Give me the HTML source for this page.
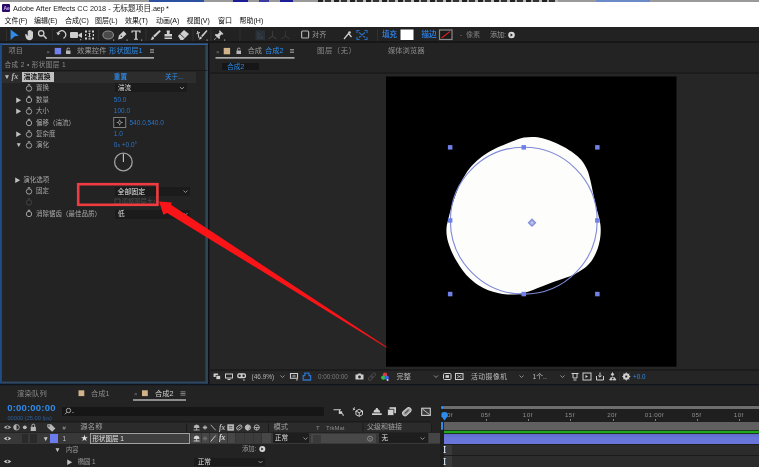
<!DOCTYPE html>
<html lang="zh-CN">
<head>
<meta charset="utf-8">
<title>Adobe After Effects CC 2018 - 无标题项目.aep *</title>
<style>
html,body{margin:0;padding:0;}
body{width:759px;height:467px;position:relative;overflow:hidden;background:#232323;
 font-family:"Liberation Sans","Noto Sans CJK SC",sans-serif;font-size:7px;color:#a0a0a0;}
.a{position:absolute;}
.t{position:absolute;white-space:nowrap;line-height:10px;height:10px;filter:blur(0.3px);}
.b{color:#2d8ceb;}
.w{color:#dcdcdc;}
.g{color:#8a8a8a;}
.d{color:#555;}
svg{position:absolute;left:0;top:0;overflow:visible;}
.ic{filter:blur(0.3px);}
</style>
</head>
<body>
<!-- top cropped strip -->
<div class="a" style="left:0;top:0;width:759px;height:1.500px;background:#9a9a9a"></div>
<div class="a" style="left:149px;top:0;width:55px;height:1.500px;background:#2c50a0"></div>
<div class="a" style="left:233px;top:0;width:15px;height:1.500px;background:#1c1c94"></div>
<div class="a" style="left:259px;top:0;width:10px;height:1.500px;background:#3a3aa0"></div>
<div class="a" style="left:280px;top:0;width:13px;height:1.500px;background:#1c1c94"></div>
<div class="a" style="left:318px;top:0;width:240px;height:2px;background:repeating-linear-gradient(90deg,#222 0,#222 5px,#aaa 5px,#aaa 7px,#333 7px,#333 13px,#bbb 13px,#bbb 16px)"></div>
<div class="a" style="left:596px;top:0;width:54px;height:1.500px;background:#6a8ac8"></div>
<!-- title bar + menu bar -->
<div class="a" style="left:0;top:2px;width:759px;height:25px;background:#fff"></div>
<div class="a" style="left:2px;top:4px;width:8px;height:8px;background:#2c0c62;border-radius:1px"></div>
<div class="t" style="left:3.400px;top:3.100px;font-size:5px;color:#c9a7ff;font-weight:bold">Ae</div>
<div class="t" style="left:13px;top:4.3px;font-size:7.3px;color:#1c1c1c">Adobe After Effects CC 2018 - <span style="font-size:7.700px">无标题项目</span><span style="letter-spacing:-.25px">.aep *</span></div>
<div class="t" style="left:4.5px;top:16px;font-size:7px;color:#0c0c0c">文件(F)</div><div class="t" style="left:34px;top:16px;font-size:7px;color:#0c0c0c">编辑(E)</div><div class="t" style="left:65px;top:16px;font-size:7px;color:#0c0c0c">合成(C)</div><div class="t" style="left:95px;top:16px;font-size:7px;color:#0c0c0c">图层(L)</div><div class="t" style="left:125px;top:16px;font-size:7px;color:#0c0c0c">效果(T)</div><div class="t" style="left:156px;top:16px;font-size:7px;color:#0c0c0c">动画(A)</div><div class="t" style="left:186.5px;top:16px;font-size:7px;color:#0c0c0c">视图(V)</div><div class="t" style="left:218px;top:16px;font-size:7px;color:#0c0c0c">窗口</div><div class="t" style="left:239.5px;top:16px;font-size:7px;color:#0c0c0c">帮助(H)</div>
<!-- toolbar -->
<div class="a" style="left:0;top:27px;width:759px;height:14px;background:#222"></div>
<div class="a" style="left:0;top:41px;width:759px;height:2.600px;background:#171717"></div>
<svg class="ic" width="759" height="467" viewBox="0 0 759 467">
 <g fill="none" stroke="#303030" stroke-width="1">
  <path d="M6.5 29v12M52.5 29v12M98.500 29v12M146 29v12M193 29v12M211 29v12M240 29v12M377.500 29v12"/>
 </g>
 <!-- selection arrow -->
 <path d="M10.600 29.500L18.800 35.700L14.700 36.300L10.600 40Z" fill="#2d8ceb"/>
 <!-- hand -->
 <path d="M25 34.5l1.2-.6l1.6 2v-5.2h1.3v3.5v-4.3h1.3v4.3v-3.8h1.3v4v-2.8h1.3v5.2c0 2.2-1.4 3.4-3.6 3.4c-1.800 0-2.600-.8-3.400-2.200z" fill="#cfcfcf"/>
 <!-- zoom -->
 <circle cx="41.200" cy="33.300" r="2.700" fill="none" stroke="#cfcfcf" stroke-width="1.300"/>
 <path d="M43.600 35.600l3 3.200" stroke="#cfcfcf" stroke-width="1.500"/>
 <!-- rotate -->
 <path d="M58 33.500a4 4 0 1 1 5.500 4.800" fill="none" stroke="#cfcfcf" stroke-width="1.300"/>
 <path d="M56.300 32.200l1.700 3.200l2.400-2.400z" fill="#cfcfcf"/>
 <!-- camera -->
 <rect x="70" y="32" width="8" height="6" rx="1" fill="#cfcfcf"/>
 <path d="M78.500 34.500l3.500-2v5.500l-3.500-2z" fill="#cfcfcf"/>
 <rect x="80" y="39" width="1.200" height="1.200" fill="#999"/>
 <!-- pan behind -->
 <g fill="#cfcfcf">
  <rect x="85" y="30.500" width="2" height="2"/><rect x="88.500" y="30.500" width="2" height="1.200"/><rect x="92" y="30.500" width="2" height="2"/>
  <rect x="85" y="34" width="1.200" height="2"/><rect x="92.800" y="34" width="1.200" height="2"/>
  <rect x="85" y="37.500" width="2" height="2"/><rect x="88.500" y="38.300" width="2" height="1.200"/><rect x="92" y="37.500" width="2" height="2"/>
  <path d="M89.500 32.500l1.500 1.500h-1v2h1l-1.500 1.500l-1.500-1.500h1v-2h-1z"/>
 </g>
 <!-- ellipse tool -->
 <ellipse cx="108.200" cy="35" rx="5.300" ry="4" fill="#4a4a4a" stroke="#8c8c8c" stroke-width="1.100"/>
 <rect x="113" y="39.500" width="1.200" height="1.200" fill="#999"/>
 <!-- pen -->
 <path d="M118 39.500l1-4l4.500-4.500l3 3l-4.500 4.500z" fill="#cfcfcf"/>
 <circle cx="121.300" cy="36.300" r="0.800" fill="#222"/>
 <rect x="126.500" y="39.500" width="1.200" height="1.200" fill="#999"/>
 <!-- T -->
 <path d="M131.500 30.500h9v2.300h-1l-.4-1.200h-2.300v7l1.200.3v.8h-4v-.8l1.200-.3v-7h-2.300l-.4 1.200h-1z" fill="#cfcfcf"/>
 <rect x="141" y="39.500" width="1.200" height="1.200" fill="#999"/>
 <!-- brush -->
 <path d="M159.500 30l1.300 1.300l-6 6l-1.800-1.200z" fill="#cfcfcf"/>
 <path d="M152.500 36.500l1.800 1.500c-.5 1.500-2 2-3.800 1.800c1-.8 1-2.300 2-3.300z" fill="#cfcfcf"/>
 <!-- stamp -->
 <path d="M166.500 30.500h3.500l-.6 3.500h2.600v2.500h-7.500v-2.500h2.600z" fill="#cfcfcf"/>
 <rect x="164.500" y="37.500" width="7.500" height="1.500" fill="#cfcfcf"/>
 <!-- eraser -->
 <path d="M178 36l6-6l5 4l-6 6h-2.500z" fill="#cfcfcf"/>
 <path d="M180 34l4.500 4" stroke="#222" stroke-width=".8"/>
 <!-- roto brush -->
 <path d="M206.500 30l1 1l-5 6l-1.500-1z" fill="#cfcfcf"/>
 <path d="M200.500 36.500l1.500 1.300c-.6 1.400-1.800 1.800-3.300 1.600c.9-.8.900-2 1.800-2.900z" fill="#cfcfcf"/>
 <path d="M197.500 31l1.500 7" stroke="#cfcfcf" stroke-width="1"/>
 <path d="M196.500 33.500l3.500-1" stroke="#cfcfcf" stroke-width="1"/>
 <rect x="206.500" y="39.500" width="1.200" height="1.200" fill="#999"/>
 <!-- pin -->
 <path d="M219.500 30l4 4l-1 .8l-.8-.5l-2 2l.3 2l-1 .8l-2-2l-2.500 2.800l-.5-.5l2.800-2.500l-2-2l.8-1l2 .3l2-2l-.5-.8z" fill="#cfcfcf"/>
 <rect x="224" y="39.500" width="1.200" height="1.200" fill="#999"/>
 <!-- disabled axis icons -->
 <rect x="255.500" y="30.500" width="9.500" height="9.500" fill="#2a3038"/>
 <path d="M258 38v-5.500l5 5.500z" fill="none" stroke="#3a4048" stroke-width="1"/>
 <path d="M272.500 31v5l-4 3M272.500 36l4 3" fill="none" stroke="#3a3a3a" stroke-width="1.200"/>
 <path d="M285.500 31v5l-4 3M285.500 36l4 3" fill="none" stroke="#343434" stroke-width="1.200"/>
 <!-- snapping checkbox -->
 <rect x="301.600" y="31" width="7" height="7" rx="1" fill="none" stroke="#b0b0b0" stroke-width="1.200"/>
 <!-- snap icons -->
 <path d="M344 39l4.500-5.500l3 3.500" fill="none" stroke="#cfcfcf" stroke-width="1.200"/>
 <circle cx="349.500" cy="32.500" r="1.300" fill="#cfcfcf"/>
 <path d="M357 33v-2.500h2.500M364.500 30.500h2.500v2.500M367 37v2.500h-2.500M359.500 39.500h-2.500v-2.500M359 32.500l6 5M365 32.500l-6 5" fill="none" stroke="#2870c0" stroke-width="1.100"/>
 <!-- fill swatch -->
 <rect x="400.500" y="29.500" width="13" height="10.500" fill="#fff"/>
 <!-- stroke swatch -->
 <rect x="439.500" y="30" width="12.500" height="9.500" fill="#1a1a1a" stroke="#8a8a8a" stroke-width="1.200"/>
 <path d="M441.500 38l8.500-6.500" stroke="#d82020" stroke-width="1.100"/>
 <!-- add icon -->
 <circle cx="511.500" cy="35" r="3.300" fill="#d8d8d8"/>
 <path d="M510.500 33.300l2.300 1.700l-2.300 1.700z" fill="#222"/>
</svg>
<div class="t" style="left:312px;top:30px;font-size:7.200px;color:#9a9a9a">对齐</div>
<div class="t" style="left:382px;top:30px;font-size:7.500px;color:#2a7ad8;font-weight:bold">填充</div>
<div class="t" style="left:421.500px;top:30px;font-size:7.500px;color:#2a7ad8;font-weight:bold">描边</div>
<div class="t" style="left:460px;top:30px;font-size:7px;color:#777">-</div><div class="t" style="left:466px;top:30px;font-size:7.100px;color:#777">像素</div>
<div class="t" style="left:490px;top:30px;font-size:7px;color:#9a9a9a">添加:</div>

<!-- left panel: effect controls -->
<div class="a" style="left:0;top:43px;width:759px;height:424px;background:#232323"></div>
<svg width="759" height="467" viewBox="0 0 759 467">
 <rect x="0" y="43.500" width="208" height="1.400" fill="#3566a2"/>
 <rect x="0" y="43.400" width="1.900" height="340.400" fill="#1f4c84"/>
 <rect x="205.300" y="45.200" width="2.700" height="338.600" fill="#2c4656"/>
 <rect x="1.900" y="381.600" width="206.100" height="2.200" fill="#2e4a66"/>
 <rect x="208" y="43.400" width="1.400" height="340.400" fill="#0f0f18"/>
 <rect x="0" y="383.800" width="759" height="1.500" fill="#10141c"/>
</svg>
<!-- tabs -->
<div class="t" style="left:8.500px;top:46px;font-size:7.200px;color:#8c8c8c">项目</div>
<div class="t" style="left:46.500px;top:46.500px;font-size:6px;color:#7a7a7a">×</div>
<svg width="759" height="467" viewBox="0 0 759 467"><rect x="54.700" y="47.900" width="6.400" height="6.400" fill="#7080ec"/></svg>
<svg class="ic" width="759" height="467" viewBox="0 0 759 467">
 <rect x="66" y="50.500" width="4.500" height="3.500" fill="#b8b8b8"/>
 <path d="M67 50.500v-1.200a1.300 1.300 0 0 1 2.600 0" fill="none" stroke="#b8b8b8" stroke-width=".9"/>
 <path d="M150 49.500h4M150 51h4M150 52.500h4" stroke="#9a9a9a" stroke-width=".8"/>
</svg>
<div class="t" style="left:77px;top:46px;font-size:7.300px;color:#9c9c9c;letter-spacing:.1px">效果控件</div>
<div class="t b" style="left:109px;top:46px;font-size:7.300px;letter-spacing:.1px">形状图层1</div>
<svg width="759" height="467" viewBox="0 0 759 467"><rect x="46" y="57" width="108" height="1.700" fill="#a8a8a8"/><rect x="215.500" y="57" width="79" height="1.700" fill="#a8a8a8"/><rect x="133" y="399.200" width="53" height="1.600" fill="#a8a8a8"/></svg>
<!-- breadcrumb -->
<div class="t" style="left:4.500px;top:59.500px;font-size:6.600px;color:#8c8c8c;letter-spacing:.38px">合成 2 • 形状图层 1</div>
<div class="a" style="left:1.500px;top:70px;width:205px;height:1px;background:#1a1a1a"></div>
<!-- fx header row -->
<div class="a" style="left:1.800px;top:71.500px;width:194.700px;height:11px;background:#2d2d2d"></div>
<div class="a" style="left:21.700px;top:71.700px;width:32.600px;height:9.900px;background:#c2c2c2"></div>
<div class="t" style="left:3.800px;top:72px;font-size:6.500px;color:#c0c0c0">▼</div>
<div class="t" style="left:11.500px;top:71.500px;font-size:8px;color:#b8b8b8;font-family:'Liberation Serif',serif;font-style:italic;font-weight:bold">fx</div>
<div class="t" style="left:23.800px;top:72px;font-size:6.700px;color:#101010;font-weight:bold">湍流置换</div>
<div class="t b" style="left:113.800px;top:72px;font-size:6.600px;font-weight:bold">重置</div>
<div class="t b" style="left:165px;top:72px;font-size:6.600px">关于...</div>
<div class="t" style="left:36px;top:83.0px;font-size:6.500px;color:#a8a8a8">置换</div><div class="t" style="left:36px;top:94.5px;font-size:6.500px;color:#a8a8a8">数量</div><div class="t" style="left:15.500px;top:94.5px;font-size:6px;color:#c0c0c0">▶</div><div class="t" style="left:36px;top:106.0px;font-size:6.500px;color:#a8a8a8">大小</div><div class="t" style="left:15.500px;top:106.0px;font-size:6px;color:#c0c0c0">▶</div><div class="t" style="left:36px;top:117.5px;font-size:6.500px;color:#a8a8a8">偏移（湍流）</div><div class="t" style="left:36px;top:129.0px;font-size:6.500px;color:#a8a8a8">复杂度</div><div class="t" style="left:15.500px;top:129.0px;font-size:6px;color:#c0c0c0">▶</div><div class="t" style="left:36px;top:140.0px;font-size:6.500px;color:#a8a8a8">演化</div><div class="t" style="left:15.500px;top:140.0px;font-size:6.500px;color:#c0c0c0">▼</div><div class="a" style="left:114.500px;top:83.400px;width:72px;height:8.800px;background:#1b1b1b"></div>
<div class="t w" style="left:118px;top:83px;font-size:6.600px">湍流</div>
<div class="t" style="left:113.800px;top:94.500px;font-size:6.500px;color:#2b74c6">50.0</div>
<div class="t" style="left:113.800px;top:106px;font-size:6.500px;color:#2b74c6">100.0</div>
<div class="t" style="left:129.500px;top:117.500px;font-size:6.500px;color:#2b74c6">540.0,540.0</div>
<div class="t" style="left:113.800px;top:129px;font-size:6.500px;color:#2b74c6">1.0</div>
<div class="t" style="left:113.800px;top:140px;font-size:6.500px;color:#2b74c6">0<span style="font-size:5px">x</span> +0.0°</div>
<div class="t" style="left:14.500px;top:175px;font-size:6px;color:#c0c0c0">▶</div>
<div class="t" style="left:23.300px;top:175px;font-size:6.500px;color:#a8a8a8">演化选项</div>
<div class="t" style="left:36px;top:186px;font-size:6.500px;color:#a8a8a8">固定</div>
<div class="a" style="left:114.500px;top:187px;width:75.500px;height:9px;background:#1b1b1b"></div>
<div class="t w" style="left:117.500px;top:186.700px;font-size:6.900px;color:#e6e6e6">全部固定</div>
<div class="t" style="left:121.600px;top:196.500px;font-size:6.300px;color:#4c4c4c">调整图层大小</div>
<div class="t" style="left:36px;top:208.500px;font-size:6.500px;color:#a8a8a8">消除锯齿（最佳品质）</div>
<div class="a" style="left:114.500px;top:209.700px;width:75.500px;height:9px;background:#1b1b1b"></div>
<div class="t w" style="left:117.800px;top:209.300px;font-size:6.900px">低</div>
<svg class="ic" width="759" height="467" viewBox="0 0 759 467"><circle cx="29.0" cy="88.5" r="2.700" fill="none" stroke="#b4b4b4" stroke-width=".85"/><path d="M27.8 84.8h2.400" stroke="#b4b4b4" stroke-width="1"/><circle cx="29.0" cy="100.0" r="2.700" fill="none" stroke="#b4b4b4" stroke-width=".85"/><path d="M27.8 96.3h2.400" stroke="#b4b4b4" stroke-width="1"/><circle cx="29.0" cy="111.5" r="2.700" fill="none" stroke="#b4b4b4" stroke-width=".85"/><path d="M27.8 107.8h2.400" stroke="#b4b4b4" stroke-width="1"/><circle cx="29.0" cy="123.0" r="2.700" fill="none" stroke="#b4b4b4" stroke-width=".85"/><path d="M27.8 119.3h2.400" stroke="#b4b4b4" stroke-width="1"/><circle cx="29.0" cy="134.5" r="2.700" fill="none" stroke="#b4b4b4" stroke-width=".85"/><path d="M27.8 130.8h2.400" stroke="#b4b4b4" stroke-width="1"/><circle cx="29.0" cy="145.5" r="2.700" fill="none" stroke="#b4b4b4" stroke-width=".85"/><path d="M27.8 141.8h2.400" stroke="#b4b4b4" stroke-width="1"/><path d="M180 87l2 2l2-2" fill="none" stroke="#9a9a9a" stroke-width=".9"/><rect x="113.700" y="117.500" width="12" height="10" fill="#1b1b1b" stroke="#808080" stroke-width="1"/><path d="M116.700 122.500h6M119.700 119.500v6" stroke="#b0b0b0" stroke-width=".8"/><circle cx="119.700" cy="122.500" r="1.400" fill="#1b1b1b" stroke="#b0b0b0" stroke-width=".7"/><circle cx="123.400" cy="162" r="8.800" fill="none" stroke="#a0a0a0" stroke-width="1.300"/><path d="M123.400 162v-8" stroke="#c8c8c8" stroke-width="1.100"/><circle cx="29.0" cy="191.5" r="2.700" fill="none" stroke="#b4b4b4" stroke-width=".85"/><path d="M27.8 187.8h2.400" stroke="#b4b4b4" stroke-width="1"/><circle cx="29.0" cy="202.5" r="2.700" fill="none" stroke="#484848" stroke-width=".85"/><path d="M27.8 198.8h2.400" stroke="#484848" stroke-width="1"/><circle cx="29.0" cy="214.0" r="2.700" fill="none" stroke="#b4b4b4" stroke-width=".85"/><path d="M27.8 210.3h2.400" stroke="#b4b4b4" stroke-width="1"/><path d="M183.500 190.500l2 2l2-2M183.500 213l2 2l2-2" fill="none" stroke="#9a9a9a" stroke-width=".9"/><rect x="115" y="199" width="5" height="5" fill="none" stroke="#484848" stroke-width=".9"/></svg>

<!-- composition panel -->
<div class="t" style="left:216px;top:46.500px;font-size:6px;color:#7a7a7a">×</div>
<svg width="759" height="467" viewBox="0 0 759 467"><rect x="223.700" y="47.900" width="6.400" height="6.400" fill="#d2b288"/></svg>
<svg class="ic" width="759" height="467" viewBox="0 0 759 467">
 <rect x="236.500" y="50.500" width="4.500" height="3.500" fill="#b8b8b8"/>
 <path d="M237.500 50.500v-1.200a1.300 1.300 0 0 1 2.600 0" fill="none" stroke="#b8b8b8" stroke-width=".9"/>
 <path d="M290 49.500h4M290 51h4M290 52.500h4" stroke="#9a9a9a" stroke-width=".8"/>
</svg>
<div class="t" style="left:247.500px;top:46px;font-size:7.300px;color:#9c9c9c">合成</div>
<div class="t b" style="left:265px;top:46px;font-size:7.300px">合成2</div>
<div class="t" style="left:317px;top:46px;font-size:7.300px;color:#8c8c8c;letter-spacing:.6px">图层（无）</div>
<div class="t" style="left:388px;top:46px;font-size:7.300px;color:#8c8c8c">媒体浏览器</div>
<div class="a" style="left:221.500px;top:62.500px;width:37.500px;height:7.500px;background:#161616"></div>
<div class="t b" style="left:227px;top:61.500px;font-size:6.800px">合成2</div>
<div class="a" style="left:210px;top:72px;width:549px;height:2px;background:#1c1c1c"></div>
<div class="a" style="left:210px;top:74px;width:549px;height:295px;background:#262626"></div>
<!-- canvas -->
<svg width="759" height="467" viewBox="0 0 759 467"><rect x="386" y="76.500" width="290.500" height="290.200" fill="#000"/></svg>
<svg width="759" height="467" viewBox="0 0 759 467" style="filter:blur(0.35px)">
 <path d="M524.0 137.6C520.2 138.3 515.4 140.3 512.0 141.5C508.6 142.7 506.9 143.6 503.6 145.0C500.3 146.4 495.7 148.2 492.0 150.2C488.3 152.2 484.6 154.6 481.4 157.0C478.2 159.4 475.4 162.0 472.8 164.7C470.2 167.4 468.1 170.2 466.0 173.4C463.9 176.6 462.0 180.3 460.2 184.0C458.4 187.7 456.8 191.7 455.4 195.5C454.0 199.3 452.7 203.3 451.6 207.1C450.5 210.8 449.4 214.7 448.6 218.0C447.8 221.3 446.9 224.1 446.6 227.0C446.3 229.9 446.4 232.5 446.7 235.3C447.0 238.1 447.7 240.9 448.7 243.9C449.7 246.9 451.1 250.4 452.5 253.5C453.9 256.6 455.5 259.3 457.3 262.2C459.1 265.1 461.0 268.2 463.1 270.9C465.2 273.6 467.3 276.2 469.9 278.6C472.5 281.0 475.4 283.4 478.5 285.3C481.6 287.2 485.0 288.9 488.2 290.2C491.4 291.5 494.6 292.3 497.8 293.0C501.0 293.7 504.3 294.2 507.5 294.4C510.7 294.6 514.2 294.5 517.1 294.2C520.0 293.9 522.4 293.3 525.0 292.6C527.6 291.9 530.0 291.1 533.0 290.0C536.0 288.9 539.5 287.4 543.1 286.0C546.7 284.6 550.8 282.9 554.7 281.5C558.6 280.1 562.8 279.0 566.3 277.6C569.8 276.2 572.8 275.0 575.9 273.4C579.0 271.8 582.0 270.0 584.6 268.0C587.2 266.0 589.4 263.9 591.3 261.3C593.2 258.7 594.8 255.5 596.1 252.6C597.4 249.7 598.2 246.9 599.0 243.9C599.8 240.9 600.4 237.5 600.6 234.3C600.8 231.1 600.8 227.9 600.4 224.6C600.0 221.3 599.1 218.1 598.2 214.5C597.3 210.9 596.1 207.0 595.2 203.2C594.3 199.4 593.6 195.5 592.8 191.7C592.0 187.8 591.2 183.6 590.3 180.1C589.4 176.6 588.8 173.6 587.5 170.5C586.2 167.4 584.5 164.4 582.6 161.8C580.7 159.2 578.6 157.3 575.9 155.1C573.2 152.8 569.8 150.4 566.3 148.3C562.8 146.2 558.2 144.1 554.7 142.5C551.2 140.9 548.3 139.9 545.0 139.0C541.7 138.1 538.5 137.2 535.0 137.0C531.5 136.8 527.8 136.8 524.0 137.6Z" fill="#fdfdfb"/>
 <circle cx="523.800" cy="220.700" r="73.400" fill="none" stroke="#7f8ad6" stroke-width="1.100"/>
 <g fill="#6f80e6">
  <rect x="447.9" y="145.1" width="4.500" height="4.500"/>
  <rect x="447.9" y="218.2" width="4.500" height="4.500"/>
  <rect x="447.9" y="291.8" width="4.500" height="4.500"/>
  <rect x="521.5" y="145.1" width="4.500" height="4.500"/>
  <rect x="521.5" y="291.8" width="4.500" height="4.500"/>
  <rect x="595.1" y="145.1" width="4.500" height="4.500"/>
  <rect x="595.1" y="218.2" width="4.500" height="4.500"/>
  <rect x="595.1" y="291.8" width="4.500" height="4.500"/>
 </g>
 <path d="M532 219.200l3.500 3.500l-3.500 3.500l-3.500-3.500z" fill="#a8b0e6" stroke="#8590da" stroke-width="1.300"/>
 <circle cx="532" cy="222.700" r="1" fill="#c4caf0"/>
</svg>
<!-- viewer controls -->
<div class="a" style="left:210px;top:369px;width:549px;height:2px;background:#1c1c1c"></div>
<div class="a" style="left:210px;top:371px;width:549px;height:13px;background:#252525"></div>

<svg class="ic" width="759" height="467" viewBox="0 0 759 467">
 <g fill="#cfcfcf">
  <rect x="213.600" y="373.500" width="4.500" height="3.500"/><rect x="216" y="375.500" width="4.500" height="4" stroke="#232323" stroke-width=".7"/>
  <path d="M225 373.500h8v5h-8zM226 374.500v3h6v-3zM227.500 379h3v1h-3z" fill-rule="evenodd"/>
  <rect x="237.200" y="373.300" width="8.800" height="5" rx="1.800"/><rect x="243.300" y="379.300" width="1.300" height="1.300"/>
 </g>
 <circle cx="239.600" cy="375.800" r="1.200" fill="#252525"/><circle cx="243.600" cy="375.800" r="1.200" fill="#252525"/>
 <path d="M280.500 375.500l2 2l2-2M434 375.500l2 2l2-2M519.500 375.500l2 2l2-2M560.500 375.500l2 2l2-2" fill="none" stroke="#9a9a9a" stroke-width=".9"/>
 <path d="M290.500 373.500h7v4.800h-7z" fill="none" stroke="#cfcfcf" stroke-width="1.100"/><path d="M292 376h4M294 374.500v3" stroke="#cfcfcf" stroke-width=".6"/><rect x="296.300" y="379.200" width="1.300" height="1.300" fill="#cfcfcf"/>
 <path d="M303.200 380v-4.300h1.600v-2.500h4.200v2.500h1.600v4.300z" fill="none" stroke="#2b72c8" stroke-width="1.300"/>
 <path d="M355.500 374.500h2l.8-1h2.400l.8 1h2v5h-8z" fill="#cfcfcf"/><circle cx="359.500" cy="377" r="1.400" fill="#252525"/>
 <g transform="rotate(-45 372 376.700)" fill="none" stroke="#474747" stroke-width="1"><rect x="367.500" y="375.300" width="5" height="2.800" rx="1.400"/><rect x="371.500" y="375.300" width="5" height="2.800" rx="1.400"/></g>
 <circle cx="385" cy="374.800" r="2.200" fill="#e03838"/><circle cx="383.300" cy="377.600" r="2.200" fill="#30c040"/><circle cx="386.700" cy="377.600" r="2.200" fill="#4060f0"/><circle cx="387.600" cy="380" r="1" fill="#d8d8d8"/>
 <rect x="443.500" y="373.500" width="7.500" height="6" rx="1" fill="none" stroke="#cfcfcf" stroke-width="1"/><rect x="445.500" y="375.200" width="3.500" height="2.600" fill="#cfcfcf"/>
 <rect x="455.500" y="373.500" width="7.500" height="6" fill="none" stroke="#cfcfcf" stroke-width="1"/><path d="M457 375l4.500 3M461.500 375l-4.500 3" stroke="#cfcfcf" stroke-width=".7"/>
 <path d="M571.500 373.500h7M573 373.500v4.500h4v-4.500M573.500 380h3" fill="none" stroke="#cfcfcf" stroke-width="1"/>
 <rect x="583" y="373" width="8" height="7" fill="none" stroke="#cfcfcf" stroke-width="1"/><path d="M585.500 375v3l2.500-1.500z" fill="#cfcfcf"/>
 <path d="M596.500 376v4h7v-4M600 372.500v4.500M598.300 375.500l1.700 1.700l1.700-1.700" fill="none" stroke="#cfcfcf" stroke-width="1"/>
 <path d="M612.500 372.500l1.500 2.500h-3zM609.500 380l1.500-2.500l1.500 2.500zM613 380l1.500-2.500l1.500 2.500zM612.500 375v1.500M611 377.500h3" fill="#cfcfcf" stroke="#cfcfcf" stroke-width=".7"/>
 <path d="M619.500 372v9" stroke="#333" stroke-width="1"/>
 <circle cx="626.300" cy="376.500" r="2.400" fill="none" stroke="#cfcfcf" stroke-width="1.800"/>
 <path d="M626.300 372.500v8M622.300 376.500h8M623.500 373.700l5.600 5.600M629.100 373.700l-5.600 5.600" stroke="#cfcfcf" stroke-width="1"/>
 <circle cx="626.300" cy="376.500" r="1.100" fill="#252525"/>
</svg>
<div class="t" style="left:251.500px;top:371.500px;font-size:6.500px;color:#b4b4b4">(46.9%)</div>
<div class="t" style="left:318px;top:371.500px;font-size:6.300px;color:#7e7e7e">0:00:00:00</div>
<div class="t" style="left:396.500px;top:371.500px;font-size:7.200px;color:#bcbcbc">完整</div>
<div class="t" style="left:471px;top:371.500px;font-size:6.800px;color:#bcbcbc;letter-spacing:.5px">活动摄像机</div>
<div class="t" style="left:532.500px;top:371.500px;font-size:6.800px;color:#bcbcbc">1个..</div>
<div class="t b" style="left:633px;top:371.500px;font-size:6.300px">+0.0</div>

<!-- timeline panel -->

<div class="t" style="left:17px;top:388.500px;font-size:7.300px;color:#8c8c8c;letter-spacing:.2px">渲染队列</div>
<svg width="759" height="467" viewBox="0 0 759 467"><rect x="78.500" y="390.300" width="5.800" height="5.800" fill="#d2b288"/><rect x="142" y="390.300" width="5.800" height="5.800" fill="#d2b288"/></svg>
<div class="t" style="left:91px;top:388.500px;font-size:7.300px;color:#8c8c8c">合成1</div>
<div class="t" style="left:134px;top:389px;font-size:6px;color:#7a7a7a">×</div>
<div class="t" style="left:155px;top:388.500px;font-size:7.300px;color:#d0d0d0">合成2</div>
<div class="t b" style="left:7.200px;top:403px;font-size:9.500px;font-weight:bold;letter-spacing:.2px">0:00:00:00</div>
<div class="t" style="left:7.400px;top:412.500px;font-size:5.700px;color:#2a5f9a">00000 (25.00 fps)</div>
<div class="a" style="left:62px;top:406.500px;width:261.500px;height:9.500px;background:#161616"></div>
<!-- column header -->
<div class="a" style="left:0;top:421px;width:431px;height:1.200px;background:#1b1b1b"></div>
<div class="a" style="left:0;top:422.500px;width:431px;height:9.500px;background:#2b2b2b"></div>
<div class="t" style="left:62.500px;top:422.500px;font-size:6px;color:#9a9a9a">#</div>
<div class="t" style="left:80.300px;top:422px;font-size:7.300px;color:#a0a0a0;letter-spacing:.2px">源名称</div>
<div class="t" style="left:273.500px;top:422px;font-size:7.300px;color:#a0a0a0">模式</div>
<div class="t" style="left:316px;top:422.500px;font-size:6px;color:#8a8a8a">T</div>
<div class="t" style="left:326px;top:422.500px;font-size:6px;color:#8a8a8a">TrkMat</div>
<div class="t" style="left:367px;top:422px;font-size:7px;color:#a0a0a0">父级和链接</div>
<!-- layer row -->
<div class="a" style="left:0;top:432.500px;width:440px;height:11.500px;background:#383838"></div>
<div class="a" style="left:22.400px;top:434px;width:5.500px;height:9px;background:#2a2a2a"></div>
<div class="a" style="left:30px;top:434px;width:7px;height:9px;background:#2a2a2a"></div>
<div class="t" style="left:42.600px;top:433.800px;font-size:6.500px;color:#c8c8c8">▼</div>
<div class="a" style="left:50px;top:433.700px;width:8px;height:9.800px;background:#6c7cec"></div>
<div class="t" style="left:62.500px;top:433.500px;font-size:6.500px;color:#c0c0c0">1</div>
<div class="t" style="left:81px;top:433.300px;font-size:7px;color:#e0e0e0">★</div>
<div class="a" style="left:90px;top:433.200px;width:98px;height:9px;background:#3e3e3e;border:.8px solid #a0a0a0"></div>
<div class="t" style="left:92.500px;top:433.500px;font-size:6.500px;color:#e6e6e6">形状图层 1</div>
<div class="a" style="left:191px;top:433.200px;width:80px;height:10px;background:#474747"></div><div class="a" style="left:236px;top:433.200px;width:25.500px;height:10px;background:#3c3c3c"></div>
<div class="a" style="left:200.7px;top:433.200px;width:.8px;height:10px;background:#343434"></div><div class="a" style="left:209.3px;top:433.200px;width:.8px;height:10px;background:#343434"></div><div class="a" style="left:217.9px;top:433.200px;width:.8px;height:10px;background:#343434"></div><div class="a" style="left:226.6px;top:433.200px;width:.8px;height:10px;background:#343434"></div><div class="a" style="left:235.2px;top:433.200px;width:.8px;height:10px;background:#343434"></div><div class="a" style="left:243.9px;top:433.200px;width:.8px;height:10px;background:#343434"></div><div class="a" style="left:252.6px;top:433.200px;width:.8px;height:10px;background:#343434"></div><div class="a" style="left:261.2px;top:433.200px;width:.8px;height:10px;background:#343434"></div>
<div class="a" style="left:273px;top:433.200px;width:36px;height:10px;background:#1e1e1e"></div>
<div class="t w" style="left:274.800px;top:433.300px;font-size:6.600px;color:#e0e0e0">正常</div>
<div class="a" style="left:311px;top:433.700px;width:65px;height:9.800px;background:#484848"></div>
<div class="a" style="left:313px;top:435px;width:8px;height:7.500px;background:#3a3a3a"></div>
<div class="a" style="left:378.500px;top:433.200px;width:49.500px;height:10px;background:#1e1e1e"></div>
<div class="a" style="left:428.600px;top:433.200px;width:11.400px;height:10px;background:#454545"></div>
<div class="t w" style="left:381.600px;top:433.300px;font-size:6.600px;color:#e0e0e0">无</div>
<!-- sub rows -->
<div class="t" style="left:54.300px;top:445px;font-size:6.500px;color:#c0c0c0">▼</div>
<div class="t" style="left:66px;top:444.500px;font-size:6.300px;color:#9a9a9a">内容</div>
<div class="t" style="left:242px;top:444px;font-size:6.300px;color:#9a9a9a">添加:</div>
<div class="t" style="left:66.500px;top:456.500px;font-size:6px;color:#c0c0c0">▶</div>
<div class="t" style="left:77.700px;top:456.500px;font-size:6.300px;color:#9a9a9a">椭圆 1</div>
<div class="a" style="left:194px;top:457.500px;width:70.500px;height:8.500px;background:#1b1b1b"></div>
<div class="t w" style="left:197.700px;top:456.800px;font-size:6.600px;color:#e0e0e0">正常</div>
<!-- time graph -->
<div class="a" style="left:440px;top:405px;width:319px;height:62px;background:#1e1e1e"></div>
<div class="a" style="left:444px;top:405.800px;width:315px;height:3.200px;background:#6e6e6e"></div>
<div class="a" style="left:440.600px;top:405.800px;width:3.300px;height:3.700px;background:#2d8ceb;border-radius:1px"></div>
<div class="a" style="left:444px;top:409.500px;width:315px;height:11.500px;background:#1f1f1f"></div>
<div class="a" style="left:444px;top:421.500px;width:315px;height:8.500px;background:#606060"></div>
<div class="a" style="left:444px;top:430px;width:315px;height:4px;background:#1a3a1a"></div>
<div class="a" style="left:444px;top:430.800px;width:315px;height:2.200px;background:#20a820"></div>
<div class="a" style="left:444px;top:434.300px;width:315px;height:9.500px;background:linear-gradient(#5e6ace,#6876da 40%,#6876da)"></div>
<div class="a" style="left:444px;top:444.500px;width:315px;height:11px;background:#2c2c2c"></div>
<div class="a" style="left:444px;top:456px;width:315px;height:11px;background:#2c2c2c"></div>
<div class="a" style="left:444px;top:444.500px;width:8px;height:11px;background:#3a3a3a"></div>
<div class="a" style="left:444px;top:456px;width:8px;height:11px;background:#3a3a3a"></div>
<div class="a" style="left:440px;top:455px;width:319px;height:1px;background:#1c1c1c"></div>
<div class="t" style="left:447px;top:409.500px;font-size:6.200px;letter-spacing:.35px;color:#8e8e8e">0f</div><div class="t" style="left:470.5px;top:409.500px;font-size:6.200px;letter-spacing:.35px;color:#8e8e8e;width:30px;text-align:center">05f</div><div class="a" style="left:486.0px;top:418.500px;width:1px;height:2px;background:#808080"></div><div class="t" style="left:512.7px;top:409.500px;font-size:6.200px;letter-spacing:.35px;color:#8e8e8e;width:30px;text-align:center">10f</div><div class="a" style="left:528.2px;top:418.500px;width:1px;height:2px;background:#808080"></div><div class="t" style="left:554.9px;top:409.500px;font-size:6.200px;letter-spacing:.35px;color:#8e8e8e;width:30px;text-align:center">15f</div><div class="a" style="left:570.4px;top:418.500px;width:1px;height:2px;background:#808080"></div><div class="t" style="left:597.1px;top:409.500px;font-size:6.200px;letter-spacing:.35px;color:#8e8e8e;width:30px;text-align:center">20f</div><div class="a" style="left:612.6px;top:418.500px;width:1px;height:2px;background:#808080"></div><div class="t" style="left:639.3px;top:409.500px;font-size:6.200px;letter-spacing:.35px;color:#8e8e8e;width:30px;text-align:center">01:00f</div><div class="a" style="left:654.8px;top:418.500px;width:1px;height:2px;background:#808080"></div><div class="t" style="left:681.5px;top:409.500px;font-size:6.200px;letter-spacing:.35px;color:#8e8e8e;width:30px;text-align:center">05f</div><div class="a" style="left:697.0px;top:418.500px;width:1px;height:2px;background:#808080"></div><div class="t" style="left:723.7px;top:409.500px;font-size:6.200px;letter-spacing:.35px;color:#8e8e8e;width:30px;text-align:center">10f</div><div class="a" style="left:739.2px;top:418.500px;width:1px;height:2px;background:#808080"></div>
<svg class="ic" width="759" height="467" viewBox="0 0 759 467">
 <!-- playhead -->
 <path d="M441.400 414.500a3.100 2.400 0 0 1 6.200 0v1.700l-3.100 4.200l-3.100-4.200z" fill="#2d8ceb"/>
 <path d="M442 422v7.800" stroke="#2d8ceb" stroke-width="2"/>
 <path d="M444.600 446.500v6M443.600 446.500h2M443.600 452.500h2M444.600 458.500v6M443.600 458.500h2M443.600 464.500h2" stroke="#d4e4f8" stroke-width="1.100"/>
 <!-- search icon -->
 <circle cx="68.500" cy="410.500" r="2.200" fill="none" stroke="#a8a8a8" stroke-width="1"/><path d="M66.800 412.300l-1.800 2" stroke="#a8a8a8" stroke-width="1"/><path d="M72 412l1 1l1-1" fill="#a8a8a8"/>
 <!-- right-hand icons -->
 <g fill="none" stroke="#cfcfcf" stroke-width="1.100">
  <path d="M333.500 409.800h7.500M339.500 409.800v2"/>
  <rect x="338.800" y="411.300" width="3.400" height="2.600" fill="#cfcfcf" stroke="none"/>
  <path d="M342.300 413.500l1.200 2.200"/>
  <path d="M352.800 408.300l2.200 1.500M354.700 407.300l-1.500 3" stroke-width=".9"/>
  <path d="M359.200 409.300l3.300 1.700v3.600l-3.300 1.700l-3.300-1.700v-3.600zM355.900 411l3.300 1.700l3.300-1.700M359.200 412.700v3.600" stroke-width="1"/>
 </g>
 <g fill="#cfcfcf" stroke="none">
  <path d="M372 413.200h9.700v1.700h-9.700zM373.500 412.600c0-2.200 1.200-3 2.200-3.200c0-.9.500-1.400 1.150-1.400c.65 0 1.150.5 1.150 1.400c1 .2 2.200 1 2.200 3.200z"/>
  <path d="M389.500 407.200h6.500v6h-6.500z"/>
  <path d="M387.500 409.300h6.400v6.200h-6.400z" stroke="#232323" stroke-width=".8"/>
 </g>
 <g transform="rotate(-42 406.800 411.700)"><rect x="402" y="409.300" width="9.600" height="4.800" rx="2.400" fill="#9a9a9a" stroke="#cfcfcf" stroke-width="1.100"/><path d="M404.500 411.700h4.600" stroke="#232323" stroke-width=".9"/></g>
 <rect x="421.700" y="408.200" width="8.600" height="7.200" fill="#3a3a3a" stroke="#cfcfcf" stroke-width="1.100"/><path d="M422.500 409l7 5.600" stroke="#cfcfcf" stroke-width=".9"/>
 <!-- header icons -->
 <path d="M3.800 427.3q3.700-3.600 7.400 0q-3.700 3.600-7.400 0z" fill="#b0b0b0"/><circle cx="7.500" cy="427.3" r="1.150" fill="#262626"/>
 <circle cx="16.500" cy="427.300" r="2.800" fill="none" stroke="#b0b0b0" stroke-width=".9"/><path d="M16.500 424.500a2.800 2.800 0 0 0 0 5.600z" fill="#b0b0b0"/>
 <circle cx="24.800" cy="427.300" r="1.900" fill="#b8b8b8"/>
 <rect x="30.700" y="427" width="5.200" height="4" fill="#b8b8b8"/><path d="M31.900 427v-1.500a1.400 1.400 0 0 1 2.800 0v1.500" fill="none" stroke="#b8b8b8" stroke-width="1"/>
 <path d="M47.300 424.300h3.800l4.300 4.200l-3.300 3.200l-4.800-4.500z" fill="#b8b8b8"/><circle cx="49" cy="426" r=".8" fill="#2b2b2b"/>
 <!-- switches header icons -->
 <g stroke="#b8b8b8" fill="none" stroke-width=".9">
  <path d="M193.600 430h6M196.600 430v-2.500M194.100 427.500a2.500 2.500 0 0 1 5 0z" fill="#b8b8b8"/>
  <path d="M202.800 427.500h4.400M205 425.300v4.400M203.500 426l3 3M206.500 426l-3 3"/>
  <path d="M210.700 424.800l5 5.500"/>
  <rect x="227.800" y="424.800" width="5.800" height="5.400" fill="#b8b8b8"/>
  <path d="M229 426.500h3.400M229 428.200h3.400" stroke="#2b2b2b" stroke-width=".6"/>
  <ellipse cx="239.300" cy="427.500" rx="3" ry="2" transform="rotate(-40 239.300 427.500)"/><path d="M238 428.800l2.600-2.600"/>
  <circle cx="248" cy="427.500" r="2.600"/><path d="M248 424.900a2.600 2.600 0 0 0 0 5.200l2-3z" fill="#b8b8b8"/>
  <circle cx="256.700" cy="427.500" r="2.600"/><path d="M254.200 427.500h5M256.700 427.500v2.600"/>
 </g>
 <path d="M186.600 423.500v8M268.500 423.500v8M363 423.500v8M431.500 423.500v8" stroke="#1a1a1a" stroke-width="1"/>
 <!-- layer row icons -->
 <path d="M3.800 438.5q3.700-3.600 7.400 0q-3.700 3.600-7.400 0z" fill="#d0d0d0"/><circle cx="7.500" cy="438.5" r="1.150" fill="#262626"/>
 <g stroke="#d8d8d8" fill="none" stroke-width=".9">
  <path d="M193.600 441h6M196.600 441v-2.500M194.100 438.500a2.500 2.500 0 0 1 5 0z" fill="#d8d8d8"/>
  <path d="M202.800 438.500h4.400M205 436.300v4.400M203.500 437l3 3M206.500 437l-3 3" stroke="#6e6e6e"/>
  <path d="M210.700 441.500l5-6"/>
 </g>
 <path d="M303.500 437.500l2 2l2-2M420.500 437.500l2 2l2-2M258.500 461l2 2l2-2" fill="none" stroke="#9a9a9a" stroke-width=".9"/>
 <circle cx="370" cy="438.700" r="2.500" fill="none" stroke="#8a8a8a" stroke-width="1"/><circle cx="370" cy="438.700" r=".8" fill="#8a8a8a"/>
 <circle cx="262.300" cy="449" r="3" fill="#d8d8d8"/><path d="M261.300 447.400l2.300 1.600l-2.300 1.600z" fill="#232323"/>
 <path d="M3.800 461.5q3.700-3.600 7.400 0q-3.700 3.600-7.400 0z" fill="#d0d0d0"/><circle cx="7.500" cy="461.5" r="1.150" fill="#262626"/>
 <path d="M180.500 391.800h5M180.500 393.500h5M180.500 395.200h5" stroke="#9a9a9a" stroke-width=".8"/>
</svg>
<div class="t" style="left:219px;top:422.500px;font-size:7.500px;color:#b8b8b8;font-family:'Liberation Serif',serif;font-style:italic;font-weight:bold">fx</div>
<div class="t" style="left:219px;top:433.300px;font-size:7.500px;color:#d8d8d8;font-family:'Liberation Serif',serif;font-style:italic;font-weight:bold">fx</div>
<!-- red annotation -->
<svg width="759" height="467" viewBox="0 0 759 467" style="filter:blur(0.35px)">
 <rect x="78.200" y="184.200" width="79.200" height="20.600" fill="none" stroke="#f03c40" stroke-width="2.600"/>
 <path d="M159.100 201.600L171.800 202.600L171 204.800L386.500 346.700L386.500 347.700L167.100 213L163.400 214.800Z" fill="#f91418"/>
</svg>
</body>
</html>
